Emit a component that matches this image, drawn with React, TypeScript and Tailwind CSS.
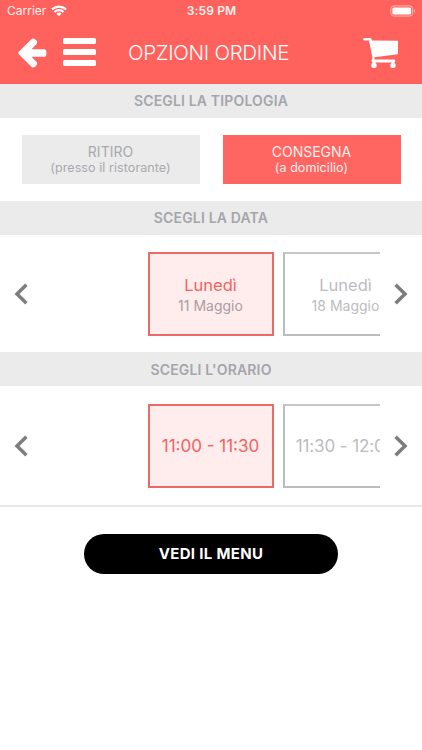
import React from "react";

function SectionTitle({ children, className = "" }: { children: React.ReactNode; className?: string }) {
  return (
    <h2
      className={`flex h-[34px] shrink-0 items-center justify-center bg-[#ebebeb] text-[14px] font-semibold tracking-[0.16px] text-[#a5a5ab] ${className}`}
    >
      {children}
    </h2>
  );
}

function Chevron({ flip = false }: { flip?: boolean }) {
  return (
    <svg width="14" height="22" viewBox="0 0 14 22" fill="none" stroke="#7d7d7d" strokeWidth="3.5" className={flip ? "rotate-180" : ""}>
      <path d="M12.4 1.8L3 11l9.4 9.2" />
    </svg>
  );
}

function Picker({ children }: { children: React.ReactNode }) {
  return (
    <div className="flex items-center">
      <button aria-label="Precedente" className="flex w-[42px] justify-center">
        <Chevron />
      </button>
      <div className="flex w-[338px] gap-[9px] overflow-hidden pl-[105.5px]">{children}</div>
      <button aria-label="Successivo" className="flex w-[42px] justify-center">
        <Chevron flip />
      </button>
    </div>
  );
}

function Option({ selected = false, children }: { selected?: boolean; children: React.ReactNode }) {
  return (
    <div
      className={`flex h-[84px] w-[126px] shrink-0 flex-col items-center justify-center whitespace-nowrap border-2 ${
        selected ? "border-[#ea6a68] bg-[#ffeded] text-[#f2635f]" : "border-[#bcbcc0] border-t-[#c6c6ca] bg-white text-[#bcbcc0]"
      }`}
    >
      {children}
    </div>
  );
}

export default function App() {
  return (
    <main className="flex h-[750px] w-[422px] flex-col overflow-hidden bg-white font-['Inter','Liberation_Sans',sans-serif]">
      <header className="h-[84px] shrink-0 bg-[#ff625d] text-white">
        <div className="grid h-[22px] grid-cols-3 items-center pl-[7px] pr-[6px] text-[12px] text-[#ffefee]">
          <div className="flex items-center gap-[5px]">
            <span>Carrier</span>
            <svg width="16" height="12" viewBox="0 0 16 12" fill="none" stroke="white" strokeWidth="2.2">
              <path d="M1 4.4C5 .6 11 .6 15 4.4M3.5 7C6 4.6 10 4.6 12.5 7" />
              <path d="M8 11.3L5.4 8.7a3.8 3.8 0 0 1 5.2 0z" fill="white" stroke="none" />
            </svg>
          </div>
          <span className="text-center font-semibold tracking-[0.15px]">3:59 PM</span>
          <svg className="justify-self-end" width="26" height="12" viewBox="0 0 26 12">
            <rect x=".9" y=".9" width="21.7" height="10.2" rx="2.8" fill="none" stroke="#ffb5b2" />
            <rect x="2.4" y="2.4" width="18.7" height="7.2" rx="1.4" fill="white" />
            <path d="M24 4v4c1.4-.6 1.4-3.4 0-4" fill="#ffb5b2" />
          </svg>
        </div>
        <div className="flex h-[62px] items-center pl-[18px] pr-[23px]">
          <svg width="29" height="30" viewBox="0 0 29 30" fill="white" className="shrink-0">
            <path d="M.8 13.8L13.4 1.2c1-1 2.6-1 3.6 0l1.4 1.4c1 1 1 2.6 0 3.6l-4.9 5H26c1.5 0 2.4.9 2.4 2.4v2.8c0 1.5-.9 2.4-2.4 2.4H13.5l4.9 5c1 1 1 2.6 0 3.6L17 28.8c-1 1-2.6 1-3.6 0L.8 16.2c-.8-.8-.8-1.6 0-2.4z" />
          </svg>
          <svg width="33" height="28" viewBox="0 0 33 28" fill="white" className="mb-0.5 ml-4 shrink-0">
            <rect width="33" height="6" rx="1.5" />
            <rect y="11" width="33" height="6" rx="1.5" />
            <rect y="22" width="33" height="6" rx="1.5" />
          </svg>
          <h1 className="ml-8 whitespace-nowrap text-[20.5px] font-[350] tracking-[-0.3px]">OPZIONI ORDINE</h1>
          <svg width="36" height="32" viewBox="0 0 36 32" fill="white" className="ml-auto shrink-0">
            <path d="M1.5 1H7c1 0 1.4.6 1.6 1.4l.4 1.2 26 .2v13.4L11.4 20.3v2.3H31c1.8 0 1.8 2.8 0 2.8H10c-1.3 0-1.8-.9-1.4-2l.9-3L5.9 3.6H1.5C-.2 3.6-.2 1 1.5 1z" />
            <path d="M9.5 23h3v4h-3zM28.8 23h2.4v4h-2.4z" />
            <circle cx="11" cy="28.4" r="2.7" />
            <circle cx="30" cy="28.4" r="2.7" />
          </svg>
        </div>
      </header>

      <SectionTitle className="pb-px">SCEGLI LA TIPOLOGIA</SectionTitle>
      <div className="flex h-[83px] shrink-0 items-center gap-[23px] pl-[21.5px]">
        <button className="flex h-[49px] w-[178px] flex-col items-center justify-center bg-[#ebebeb] pt-px text-[#a9a9ae]">
          <span className="text-[14px] leading-4">RITIRO</span>
          <span className="text-[12.5px] leading-4 tracking-[0.08px]">(presso il ristorante)</span>
        </button>
        <button className="flex h-[49px] w-[178px] flex-col items-center justify-center bg-[#ff6662] pt-px text-[#ffefee]">
          <span className="text-[14px] leading-4">CONSEGNA</span>
          <span className="text-[12.5px] leading-4 tracking-[0.08px]">(a domicilio)</span>
        </button>
      </div>

      <SectionTitle className="pb-px">SCEGLI LA DATA</SectionTitle>
      <div className="flex h-[118px] shrink-0 items-center">
        <Picker>
          <Option selected>
            <span className="pt-px text-[16.5px] leading-[21px]">Lunedì</span>
            <span className="text-[14px] leading-[19px] text-[#aa9ca3]">11 Maggio</span>
          </Option>
          <Option>
            <span className="pt-px text-[16.5px] leading-[21px]">Lunedì</span>
            <span className="text-[14px] leading-[19px]">18 Maggio</span>
          </Option>
        </Picker>
      </div>

      <SectionTitle className="-mt-px pt-px">SCEGLI L'ORARIO</SectionTitle>
      <div className="flex h-[121px] shrink-0 items-center border-b-2 border-[#e8e8e9] pt-px">
        <Picker>
          <Option selected>
            <span className="pt-0.5 text-[17px]">11:00 - 11:30</span>
          </Option>
          <Option>
            <span className="pt-0.5 text-[17px] tracking-[-0.1px]">11:30 - 12:00</span>
          </Option>
        </Picker>
      </div>

      <button className="mt-[27px] flex h-10 w-[254px] items-center justify-center self-center rounded-full bg-black text-[15px] font-bold tracking-[0.32px] text-white">
        VEDI IL MENU
      </button>
    </main>
  );
}
